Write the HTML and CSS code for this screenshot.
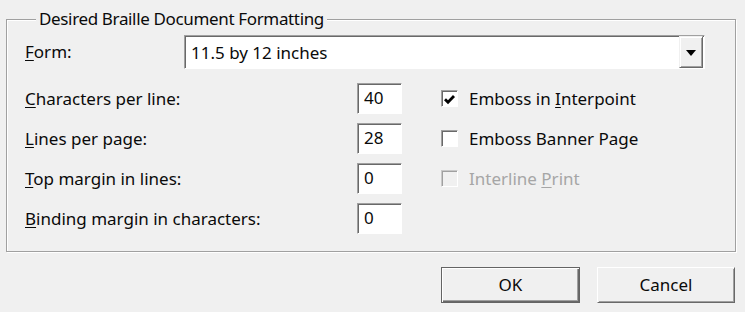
FILE: index.html
```html
<!DOCTYPE html>
<html>
<head>
<meta charset="utf-8">
<link rel="stylesheet" href="styles.css">
</head>
<body>
<div class="dialog">
  <fieldset class="group">
    <legend class="group-title">Desired Braille Document Formatting</legend>
    <div class="form-row">
      <span class="label"><u>F</u>orm:</span>
      <div class="combo">
        <span class="combo-text">11.5 by 12 inches</span>
        <span class="combo-btn">
          <svg width="10" height="6" viewBox="0 0 10 6"><path d="M0 0H10L5 6Z" fill="#000"/></svg>
        </span>
      </div>
    </div>
    <div class="grid">
      <span class="label"><u>C</u>haracters per line:</span>
      <span class="field">40</span>
      <span></span>
      <span class="check">
        <span class="box">
          <svg width="13" height="13" viewBox="0 0 13 13"><path d="M2 6.2L5 9.2L11 3" fill="none" stroke="#000" stroke-width="2.8"/></svg>
        </span>
        <span class="check-label">Emboss in <u>I</u>nterpoint</span>
      </span>

      <span class="label"><u>L</u>ines per page:</span>
      <span class="field">28</span>
      <span></span>
      <span class="check">
        <span class="box"></span>
        <span class="check-label">Emboss Banner Page</span>
      </span>

      <span class="label"><u>T</u>op margin in lines:</span>
      <span class="field">0</span>
      <span></span>
      <span class="check disabled">
        <span class="box"></span>
        <span class="check-label">Interline <u>P</u>rint</span>
      </span>

      <span class="label"><u>B</u>inding margin in characters:</span>
      <span class="field">0</span>
      <span></span>
      <span></span>
    </div>
  </fieldset>
  <div class="buttons">
    <button class="btn default">OK</button>
    <button class="btn">Cancel</button>
  </div>
</div>
</body>
</html>
```

FILE: styles.css
```css
html, body {
  margin: 0;
  padding: 0;
  background: #ffffff;
}

body {
  font-family: "Noto Sans", "Open Sans", sans-serif;
  font-size: 17px;
  line-height: 20px;
  color: #0a0a0a;
}

u {
  text-decoration: underline;
  text-underline-offset: 2px;
}

.dialog {
  width: 745px;
  height: 312px;
  box-sizing: border-box;
  background: #f0f0f0;
  padding: 9px 9px 0 6px;
}

.group {
  margin: 0;
  padding: 6px 0 17px 18px;
  border: 1px solid #a0a0a0;
  box-shadow: inset 1px 1px #ffffff, 1px 1px #ffffff;
  min-width: 0;
}

.group-title {
  margin-left: 11px;
  padding: 0 3px;
  background: #f0f0f0;
  letter-spacing: -0.35px;
}

.form-row {
  display: flex;
  align-items: center;
  height: 34px;
}

.form-row .label {
  width: 159px;
}

.combo {
  width: 521px;
  height: 34px;
  box-sizing: border-box;
  background: #fff;
  border-style: solid;
  border-width: 1px;
  border-color: #a0a0a0 #ffffff #ffffff #a0a0a0;
  box-shadow: inset 1px 1px #696969;
  display: flex;
  align-items: center;
  padding: 1px 1px 0 6px;
}

.combo-text {
  flex: 1;
}

.combo-btn {
  width: 24px;
  height: 32px;
  box-sizing: border-box;
  background: #f0f0f0;
  border-style: solid;
  border-width: 1px;
  border-color: #f0f0f0 #696969 #696969 #f0f0f0;
  box-shadow: inset 1px 1px #ffffff, inset -1px -1px #a0a0a0;
  display: flex;
  align-items: center;
  justify-content: center;
  margin-top: -1px;
}

.combo-btn svg {
  display: block;
  margin-top: 1px;
}

.grid {
  margin-top: 14px;
  display: grid;
  grid-template-columns: 332px 45px 38px 1fr;
  grid-auto-rows: 31px;
  row-gap: 9px;
  align-items: center;
}

.field {
  height: 31px;
  box-sizing: border-box;
  background: #fff;
  border-style: solid;
  border-width: 1px;
  border-color: #a0a0a0 #ffffff #ffffff #a0a0a0;
  box-shadow: inset 1px 1px #696969;
  padding: 4px 0 0 6px;
}

.check {
  display: flex;
  align-items: center;
}

.box {
  width: 17px;
  height: 17px;
  box-sizing: border-box;
  background: #fff;
  border-style: solid;
  border-width: 1px;
  border-color: #a0a0a0 #ffffff #ffffff #a0a0a0;
  box-shadow: inset 1px 1px #696969;
  display: flex;
  align-items: center;
  justify-content: center;
  margin: 0 11px 0 1px;
}

.box svg {
  display: block;
  margin: 1px 0 0 0;
}

.disabled .box {
  background: #f0f0f0;
  border-color: #c8c8c8 #ffffff #ffffff #c8c8c8;
  box-shadow: inset 1px 1px #a0a0a0;
}

.disabled .check-label {
  color: #a6a6a6;
}

.buttons {
  display: flex;
  justify-content: flex-end;
  gap: 17px;
  margin-top: 15px;
  padding-right: 1px;
}

.btn {
  font: inherit;
  color: #0a0a0a;
  height: 36px;
  box-sizing: border-box;
  background: #f0f0f0;
  border-style: solid;
  border-width: 1px;
  border-color: #ffffff #696969 #696969 #ffffff;
  box-shadow: inset 1px 1px #f0f0f0, inset -1px -1px #a0a0a0;
  padding: 0;
  width: 138px;
}

.btn.default {
  width: 139px;
  border-color: #646464;
  box-shadow: inset 1px 1px #ffffff, inset -1px -1px #696969, inset -2px -2px #a0a0a0;
}
```
